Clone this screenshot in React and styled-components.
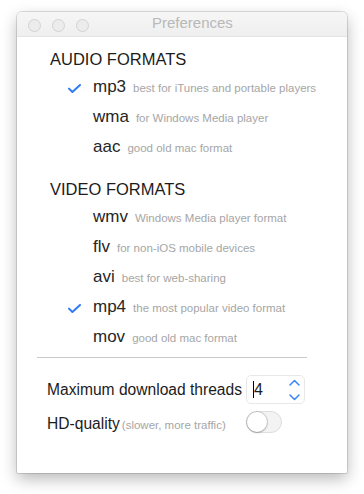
import React from 'react'
import styled, { createGlobalStyle } from 'styled-components'

const GlobalStyle = createGlobalStyle`
  body {
    margin: 0;
    background: #ffffff;
    font-family: 'Liberation Sans', Arial, sans-serif;
  }
`

const Page = styled.div`
  width: 364px;
  height: 494px;
  padding: 12px 17px 0;
  box-sizing: border-box;
`

const Window = styled.div`
  width: 330px;
  height: 461px;
  background: #ffffff;
  border-radius: 5px 5px 1px 1px;
  box-shadow: 0 0 0 1px rgba(0, 0, 0, 0.12), 0 6px 16px rgba(0, 0, 0, 0.28);
  overflow: hidden;
  display: flex;
  flex-direction: column;
`

const TitleBar = styled.div`
  height: 25px;
  flex: none;
  background: linear-gradient(#f6f6f6, #efefef);
  border-bottom: 1px solid #e4e4e4;
  box-sizing: border-box;
  display: flex;
  align-items: center;
  padding-left: 11px;
`

const Lights = styled.div`
  display: flex;
  gap: 11px;
  margin-top: 2px;
`

const Light = styled.span`
  width: 11px;
  height: 11px;
  border-radius: 50%;
  border: 1px solid #d2d2d2;
  background: #ececec;
`

const Title = styled.div`
  align-self: flex-start;
  margin-left: 63px;
  font-size: 15px;
  line-height: 22px;
  color: #b8b8b8;
`

const Content = styled.div`
  padding: 12px 0 0 0;
  display: flex;
  flex-direction: column;
`

const SectionHeader = styled.div`
  margin: ${p => p.$top || 0}px 0 3px 33px;
  font-size: 16.5px;
  line-height: 20px;
  color: #1c1c1c;
`

const FormatRow = styled.div`
  height: 30px;
  display: flex;
  align-items: baseline;
  padding-left: 51px;
  line-height: 30px;
`

const CheckSlot = styled.span`
  width: 25px;
  flex: none;
  align-self: center;
  display: flex;
  align-items: center;
  height: 30px;
  padding-top: 2px;
  box-sizing: border-box;
`

const FormatName = styled.span`
  font-size: 17px;
  color: #262626;
`

const FormatHint = styled.span`
  margin-left: 7px;
  font-size: 11.5px;
  color: #a6a6a6;
`

const Divider = styled.div`
  margin: 5px 40px 0 20px;
  height: 1px;
  background: #c9c9c9;
`

const Settings = styled.div`
  margin: 17px 0 0 30px;
  display: grid;
  grid-template-columns: 199px auto;
  row-gap: 5px;
  align-items: center;
`

const Label = styled.div`
  font-size: 15.6px;
  line-height: 20px;
  color: #1c1c1c;
  white-space: nowrap;
  margin-top: ${p => p.$shift || 0}px;
`

const Aside = styled.span`
  margin-left: 2px;
  font-size: 11.5px;
  color: #a6a6a6;
`

const NumberBox = styled.div`
  width: 59px;
  height: 29px;
  box-sizing: border-box;
  border: 1px solid #e8e8e8;
  border-radius: 5px;
  display: flex;
  align-items: center;
  padding-left: 6px;
`

const Caret = styled.span`
  width: 1px;
  height: 17px;
  background: #000000;
  margin-right: 0;
`

const NumberValue = styled.span`
  font-size: 16px;
  color: #1c1c1c;
  flex: 1;
`

const Stepper = styled.div`
  display: flex;
  flex-direction: column;
  gap: 8px;
  margin-right: 4px;
`

const Toggle = styled.div`
  width: 36px;
  height: 22px;
  box-sizing: border-box;
  border-radius: 11px;
  border: 1px solid #dedede;
  background: #f3f3f3;
  display: flex;
  align-items: center;
`

const Knob = styled.span`
  width: 20px;
  height: 20px;
  border-radius: 50%;
  background: #ffffff;
  box-shadow: 0 0 0 1px rgba(0, 0, 0, 0.12), 0 1px 2px rgba(0, 0, 0, 0.2);
`

const Check = () => (
  <svg width="13" height="9" viewBox="0 0 13 9">
    <path d="M1 4.6 L4.4 8 L12 1" fill="none" stroke="#2f7cf6" strokeWidth="2" strokeLinecap="round" strokeLinejoin="round" />
  </svg>
)

const Chevron = ({ up }) => (
  <svg width="11" height="7" viewBox="0 0 11 7">
    <path d={up ? 'M1 6 L5.5 1.5 L10 6' : 'M1 1 L5.5 5.5 L10 1'} fill="none" stroke="#3d86f7" strokeWidth="1.5" strokeLinecap="round" strokeLinejoin="round" />
  </svg>
)

const audio = [
  { name: 'mp3', hint: 'best for iTunes and portable players', on: true },
  { name: 'wma', hint: 'for Windows Media player' },
  { name: 'aac', hint: 'good old mac format' },
]

const video = [
  { name: 'wmv', hint: 'Windows Media player format' },
  { name: 'flv', hint: 'for non-iOS mobile devices' },
  { name: 'avi', hint: 'best for web-sharing' },
  { name: 'mp4', hint: 'the most popular video format', on: true },
  { name: 'mov', hint: 'good old mac format' },
]

const Formats = ({ items }) =>
  items.map(f => (
    <FormatRow key={f.name}>
      <CheckSlot>{f.on && <Check />}</CheckSlot>
      <FormatName>{f.name}</FormatName>
      <FormatHint>{f.hint}</FormatHint>
    </FormatRow>
  ))

const App = () => {
  return (
    <Page>
      <GlobalStyle />
      <Window>
        <TitleBar>
          <Lights>
            <Light />
            <Light />
            <Light />
          </Lights>
          <Title>Preferences</Title>
        </TitleBar>
        <Content>
          <SectionHeader>AUDIO FORMATS</SectionHeader>
          <Formats items={audio} />
          <SectionHeader $top={17}>VIDEO FORMATS</SectionHeader>
          <Formats items={video} />
          <Divider />
          <Settings>
            <Label>Maximum download threads</Label>
            <NumberBox>
              <Caret />
              <NumberValue>4</NumberValue>
              <Stepper>
                <Chevron up />
                <Chevron />
              </Stepper>
            </NumberBox>
            <Label $shift={5}>
              HD-quality<Aside>(slower, more traffic)</Aside>
            </Label>
            <Toggle>
              <Knob />
            </Toggle>
          </Settings>
        </Content>
      </Window>
    </Page>
  )
}

export default App
